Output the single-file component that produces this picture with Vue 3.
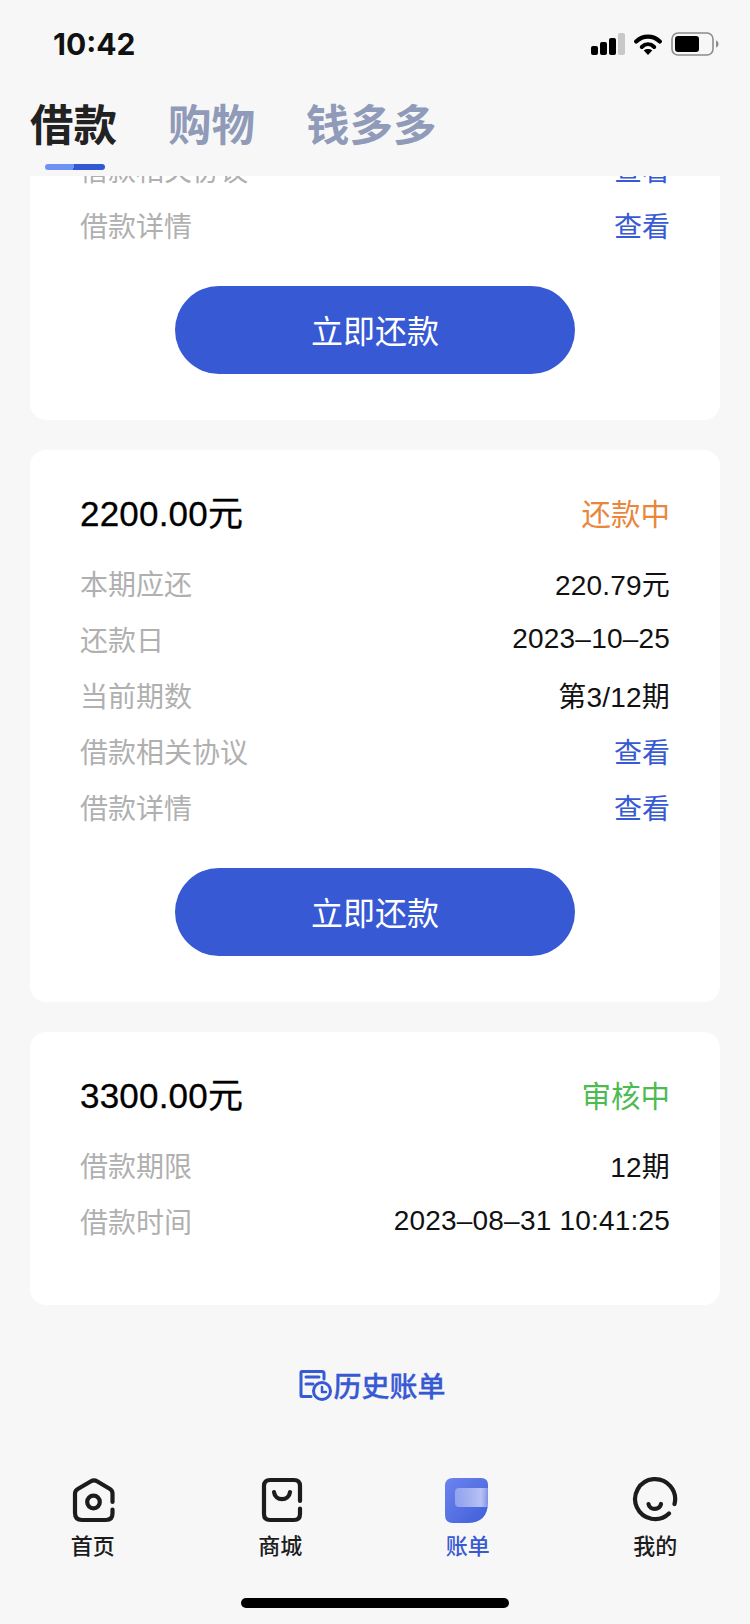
<template>
  <div class="page">
    <header class="top">
      <div class="status">
        <span class="time">10:42</span>
        <div class="status-icons">
          <svg class="signal" width="34" height="22" viewBox="0 0 34 22">
            <rect x="0" y="13" width="7" height="9" rx="2" fill="#000" />
            <rect x="9" y="9" width="7" height="13" rx="2" fill="#000" />
            <rect x="18" y="5" width="7" height="17" rx="2" fill="#000" />
            <rect x="27" y="0" width="7" height="22" rx="2" fill="#c8c8c8" />
          </svg>
          <svg class="wifi" width="28" height="21" viewBox="0 0 28 21">
            <path d="M2.200 7.500C9 1 19 1 25.800 7.500" fill="none" stroke="#000" stroke-width="4.200" stroke-linecap="round" />
            <path d="M7.800 13C11.500 9.400 16.500 9.400 20.200 13" fill="none" stroke="#000" stroke-width="4" stroke-linecap="round" />
            <path d="M14 21l-4.200-4.600c2.500-1.900 5.900-1.900 8.400 0z" fill="#000" />
          </svg>
          <svg class="battery" width="48" height="24" viewBox="0 0 48 24">
            <rect x="1" y="1" width="41" height="22" rx="6" fill="none" stroke="#8c8c8c" stroke-width="1.600" />
            <rect x="4" y="4" width="24" height="16" rx="3" fill="#000" />
            <path d="M45 8.500c1.800.6 2.500 2 2.500 3.500s-.7 2.900-2.500 3.500z" fill="#8c8c8c" />
          </svg>
        </div>
      </div>
      <nav class="tabs">
        <div v-for="t in tabs" :key="t.name" class="tab" :class="{ active: t.active }">
          <span>{{ t.name }}</span>
          <i v-if="t.active" class="tab-line"></i>
        </div>
      </nav>
    </header>

    <main class="main">
      <section class="card first">
        <div class="rows">
          <div class="row">
            <span class="label">借款相关协议</span>
            <span class="link">查看</span>
          </div>
          <div class="row">
            <span class="label">借款详情</span>
            <span class="link">查看</span>
          </div>
        </div>
        <button class="pay">立即还款</button>
      </section>

      <section v-for="bill in bills" :key="bill.amount" class="card">
        <div class="head">
          <span class="amount">{{ bill.amount }}</span>
          <span class="state" :class="bill.stateClass">{{ bill.state }}</span>
        </div>
        <div class="rows">
          <div v-for="r in bill.rows" :key="r.label" class="row">
            <span class="label">{{ r.label }}</span>
            <span :class="r.link ? 'link' : 'value'">{{ r.value }}</span>
          </div>
        </div>
        <button v-if="bill.canPay" class="pay">立即还款</button>
      </section>

      <a class="history">
        <svg width="34" height="32" viewBox="0 0 34 32" fill="none" stroke="#3759d4" stroke-width="3">
          <path d="M25 10V4.500Q25 2.500 23 2.500H3Q2 2.500 2 3.500V26.500Q2 27.500 3 27.500H12" stroke-linecap="round" />
          <path d="M7 8H20M7 15H14" stroke-linecap="round" />
          <circle cx="23" cy="22" r="8.500" />
          <path d="M23 18V23H27" stroke-width="2.500" stroke-linecap="round" stroke-linejoin="round" />
        </svg>
        <span>历史账单</span>
      </a>
    </main>

    <footer class="bar">
      <div class="nav">
        <div class="nav-item">
          <svg width="48" height="48" viewBox="0 0 48 48" fill="none" stroke="#1c1c1c" stroke-width="4.200" stroke-linecap="round" stroke-linejoin="round">
            <path d="M42.500 26V17.500Q42.500 14.500 40 13L27 5.200Q24 3.400 21 5.200L7.800 13Q5 14.700 5 17.500V37Q5 44 12 44H36Q42.500 44 42.500 37.500V33.500" />
            <circle cx="23.500" cy="26" r="6.300" />
          </svg>
          <span>首页</span>
        </div>
        <div class="nav-item">
          <svg width="48" height="48" viewBox="0 0 48 48" fill="none" stroke="#1c1c1c" stroke-width="4.200" stroke-linecap="round" stroke-linejoin="round">
            <path d="M43 25V10Q43 4 37 4H13Q7 4 7 10V38Q7 44 13 44H37Q43 44 43 38V32.500" />
            <path d="M17 16C18 25.500 32 25.500 33 16" />
          </svg>
          <span>商城</span>
        </div>
        <div class="nav-item current">
          <svg width="48" height="48" viewBox="0 0 48 48">
            <defs>
              <linearGradient id="billFill" x1="0" y1="0" x2="1" y2="1">
                <stop offset="0" stop-color="#6e84ef" />
                <stop offset="1" stop-color="#3e5fd8" />
              </linearGradient>
              <linearGradient id="billGlass" x1="0" y1="0" x2="1" y2="0">
                <stop offset="0" stop-color="#b4bff5" stop-opacity="0.6" />
                <stop offset="0.7" stop-color="#c8d0f7" stop-opacity="0.85" />
                <stop offset="1" stop-color="#f7f7f7" stop-opacity="0" />
              </linearGradient>
            </defs>
            <path d="M0 10Q0 2 8 2H36Q43 2 43 9V26Q43 47 22 47H8Q0 47 0 39Z" fill="url(#billFill)" />
            <rect x="10" y="12" width="37" height="19" rx="4" fill="url(#billGlass)" />
          </svg>
          <span>账单</span>
        </div>
        <div class="nav-item">
          <svg width="48" height="48" viewBox="0 0 48 48" fill="none" stroke="#1c1c1c" stroke-width="4.200" stroke-linecap="round">
            <path d="M42.500 28A20 20 0 1 0 37 37.500" />
            <path d="M16.500 28C17.500 34.500 27.500 34.500 29 28" />
          </svg>
          <span>我的</span>
        </div>
      </div>
      <div class="home-bar"></div>
    </footer>
  </div>
</template>

<script setup>
const tabs = [
  { name: '借款', active: true },
  { name: '购物' },
  { name: '钱多多' },
];

const bills = [
  {
    amount: '2200.00元',
    state: '还款中',
    stateClass: 'repaying',
    canPay: true,
    rows: [
      { label: '本期应还', value: '220.79元' },
      { label: '还款日', value: '2023–10–25' },
      { label: '当前期数', value: '第3/12期' },
      { label: '借款相关协议', value: '查看', link: true },
      { label: '借款详情', value: '查看', link: true },
    ],
  },
  {
    amount: '3300.00元',
    state: '审核中',
    stateClass: 'reviewing',
    canPay: false,
    rows: [
      { label: '借款期限', value: '12期' },
      { label: '借款时间', value: '2023–08–31 10:41:25' },
    ],
  },
];
</script>

<style>
body {
  background: #f7f7f7;
}
</style>

<style scoped>
.page {
  width: 750px;
  height: 1624px;
  display: flex;
  flex-direction: column;
  overflow: hidden;
  background: #f7f7f7;
  font-family: "Liberation Sans", "Noto Sans CJK SC", sans-serif;
}

.top {
  flex: none;
  height: 176px;
  position: relative;
  z-index: 1;
  background: #f7f7f7;
}

.status {
  height: 88px;
  padding: 0 31px 0 53px;
  display: flex;
  align-items: center;
  justify-content: space-between;
}

.time {
  font-family: Inter, "Liberation Sans", sans-serif;
  font-size: 30px;
  font-weight: 700;
  color: #111;
}

.status-icons {
  display: flex;
  align-items: center;
}

.signal {
  margin-right: 9px;
}

.wifi {
  margin-right: 9px;
}

.tabs {
  height: 88px;
  padding-left: 30px;
  display: flex;
  gap: 51px;
}

.tab {
  display: flex;
  flex-direction: column;
  padding-top: 8px;
  font-size: 43.500px;
  line-height: 60px;
  font-weight: 700;
  color: #8f9bb8;
}

.tab.active {
  color: #222;
}

.tab-line {
  width: 60px;
  height: 6px;
  margin: 8px 0 0 15px;
  border-radius: 3px;
  background: linear-gradient(105deg, #6f93f5 48%, #3358d4 48%);
}

.main {
  flex: 1;
  min-height: 0;
  overflow: hidden;
  display: flex;
  flex-direction: column;
  gap: 30px;
}

.card {
  flex: none;
  margin: 0 30px;
  padding: 37px 50px 46px;
  background: #fff;
  border-radius: 16px;
}

.card.first {
  margin-top: -33px;
  padding-top: 0;
  border-radius: 0 0 16px 16px;
}

.head {
  box-sizing: border-box;
  height: 56px;
  margin-bottom: 14px;
  padding-bottom: 6px;
  display: flex;
  align-items: center;
  justify-content: space-between;
}

.amount {
  margin-bottom: 4px;
  font-size: 35px;
  letter-spacing: 0.2px;
  color: #000;
  -webkit-text-stroke: 0.3px #000;
}

.state {
  font-size: 29.500px;
}

.repaying {
  color: #e8873c;
}

.reviewing {
  color: #4dbb52;
}

.rows {
  margin-bottom: 8px;
}

.row {
  box-sizing: border-box;
  height: 56px;
  padding-bottom: 4px;
  display: flex;
  align-items: center;
  justify-content: space-between;
  font-size: 28px;
}

.label {
  color: #b0b0b0;
}

.value {
  letter-spacing: 0.2px;
  color: #111;
}

.link {
  color: #3759d4;
}

.pay {
  display: block;
  width: 400px;
  height: 88px;
  margin: 31px auto 0;
  padding: 0 0 2px;
  border: none;
  border-radius: 44px;
  background: #3759d4;
  color: #fff;
  font-family: inherit;
  font-size: 32px;
}

.history {
  height: 40px;
  margin-top: 30px;
  padding-right: 5px;
  display: flex;
  align-items: center;
  justify-content: center;
  font-size: 28px;
  font-weight: 500;
  color: #3759d4;
  -webkit-text-stroke: 0.3px #3759d4;
}

.bar {
  flex: none;
  height: 164px;
  padding-top: 16px;
  box-sizing: border-box;
}

.nav {
  display: grid;
  grid-template-columns: repeat(4, 1fr);
}

.nav-item {
  display: flex;
  flex-direction: column;
  align-items: center;
  font-size: 22px;
  line-height: 30px;
  font-weight: 500;
  color: #1c1c1c;
}

.nav-item span {
  margin-top: 8px;
  margin-right: 2px;
}

.nav-item.current {
  color: #3759d4;
}

.home-bar {
  width: 268px;
  height: 10px;
  margin: 36px auto 0;
  border-radius: 5px;
  background: #000;
}
</style>
